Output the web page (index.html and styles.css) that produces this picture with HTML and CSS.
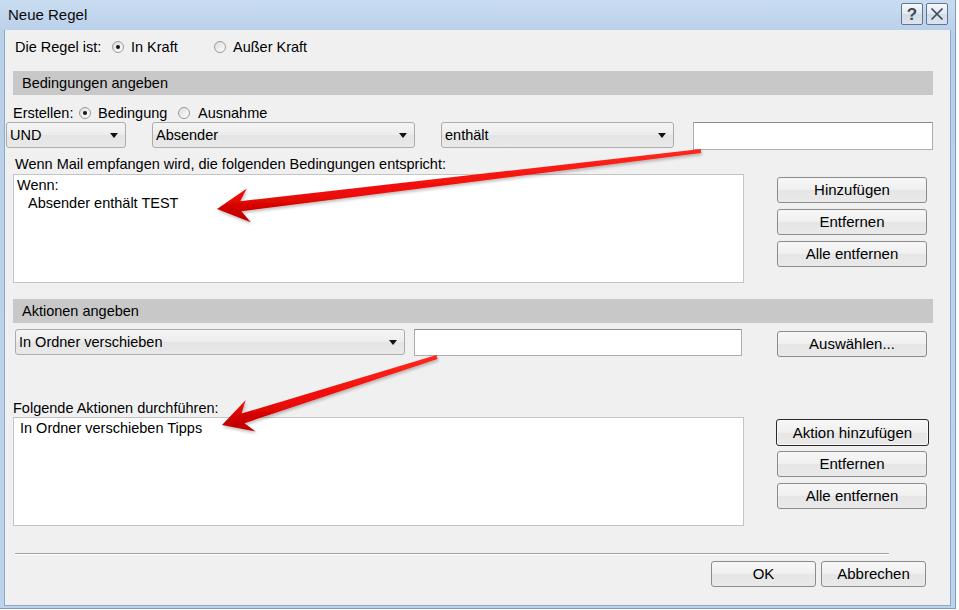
FILE: index.html
```html
<!DOCTYPE html>
<html lang="de">
<head>
<meta charset="utf-8">
<title>Neue Regel</title>
<link rel="stylesheet" href="styles.css">
</head>
<body>
<div class="window">
  <div class="titlebar">
    <span class="title">Neue Regel</span>
    <div class="tb-btns">
      <span class="tb-btn help">?</span>
      <span class="tb-btn close">
        <svg width="14" height="14" viewBox="0 0 14 14"><path d="M1.5 1.5 L12.5 12.5 M12.5 1.5 L1.5 12.5" stroke="#3c4a5c" stroke-width="1.7" fill="none"/></svg>
      </span>
    </div>
  </div>
  <div class="client">
    <div class="row state">
      <span class="lab1">Die Regel ist:</span>
      <span class="radio on"></span><span class="opt1">In Kraft</span>
      <span class="radio"></span><span class="opt2">Außer Kraft</span>
    </div>

    <div class="section s1">Bedingungen angeben</div>

    <div class="row create">
      <span class="lab2">Erstellen:</span>
      <span class="radio on"></span><span class="opt3">Bedingung</span>
      <span class="radio"></span><span class="opt4">Ausnahme</span>
    </div>

    <div class="selects">
      <div class="combo c-und">UND</div>
      <div class="combo c-abs">Absender</div>
      <div class="combo c-ent">enthält</div>
      <div class="textbox t-cond"></div>
    </div>

    <div class="label l1">Wenn Mail empfangen wird, die folgenden Bedingungen entspricht:</div>

    <div class="listrow">
      <div class="listbox lb1">
        <div class="line">Wenn:</div>
        <div class="line indent">Absender enthält TEST</div>
      </div>
      <div class="btncol bc1">
        <div class="btn">Hinzufügen</div>
        <div class="btn">Entfernen</div>
        <div class="btn">Alle entfernen</div>
      </div>
    </div>

    <div class="section s2">Aktionen angeben</div>

    <div class="actions">
      <div class="combo c-act">In Ordner verschieben</div>
      <div class="textbox t-act"></div>
      <div class="btn b-sel">Auswählen...</div>
    </div>

    <div class="label l2">Folgende Aktionen durchführen:</div>

    <div class="listrow">
      <div class="listbox lb2">
        <div class="line">In Ordner verschieben Tipps</div>
      </div>
      <div class="btncol bc2">
        <div class="btn default">Aktion hinzufügen</div>
        <div class="btn">Entfernen</div>
        <div class="btn">Alle entfernen</div>
      </div>
    </div>

    <div class="separator"></div>

    <div class="footer">
      <div class="btn fbtn">OK</div>
      <div class="btn fbtn">Abbrechen</div>
    </div>
  </div>

  <svg class="arrows" width="956" height="609" viewBox="0 0 956 609">
    <defs>
      <linearGradient id="red1" x1="0" y1="0" x2="0" y2="1">
        <stop offset="0" stop-color="#ff2a1e"/>
        <stop offset="0.6" stop-color="#ee0a08"/>
        <stop offset="1" stop-color="#b80000"/>
      </linearGradient>
      <filter id="sh" x="-10%" y="-30%" width="120%" height="160%">
        <feDropShadow dx="1" dy="2" stdDeviation="1.5" flood-color="#000" flood-opacity="0.25"/>
      </filter>
    </defs>
    <polygon filter="url(#sh)" fill="url(#red1)" points="217,209 250.8,222.2 241.4,211.2 701.2,153 700.8,149 240.2,201.2 246.8,188.4"/>
    <polygon filter="url(#sh)" fill="url(#red1)" points="222,425 255.6,431.6 244.5,423.2 437.6,358.9 436.4,355.1 241.5,413.6 245.6,400.2"/>
  </svg>
</div>
</body>
</html>
```

FILE: styles.css
```css
* { box-sizing: border-box; }
html, body { margin: 0; padding: 0; background: #ffffff; }
body {
  font-family: "Liberation Sans", Arial, sans-serif;
  font-size: 14.5px;
  color: #000;
}

.window {
  position: relative;
  width: 956px;
  height: 609px;
  background: linear-gradient(#c9dcf1, #bbd1ea 30px, #bdd3eb);
  border-right: 1px solid #7f9bbd;
  border-bottom: 1px solid #7f9bbd;
  padding: 0 4px 2px 4px;
  display: flex;
  flex-direction: column;
}

.titlebar {
  height: 30px;
  flex: none;
  display: flex;
  align-items: center;
  justify-content: space-between;
  padding: 0 3px 2px 4px;
}
.title { font-size: 15px; color: #0a0a0a; }
.tb-btns { display: flex; gap: 3px; }
.tb-btn {
  width: 22px;
  height: 22px;
  border: 1px solid #5f7590;
  border-radius: 2px;
  background: linear-gradient(#f6f8fb, #e2e8f0 50%, #d3dbe6 51%, #dde4ed);
  display: flex;
  align-items: center;
  justify-content: center;
  color: #3c4a5c;
  font-size: 17px;
  font-weight: bold;
  line-height: 1;
}

.client {
  flex: 1;
  background: #f0f0f0;
  border: 1px solid #8ea8c7;
  border-top: none;
  padding-left: 8px;
  display: flex;
  flex-direction: column;
  align-items: flex-start;
}

.row {
  display: flex;
  align-items: center;
  height: 20px;
  white-space: nowrap;
}
.state { margin-top: 7px; padding-left: 2px; }
.create { margin-top: 9px; height: 18px; }

.lab1 { width: 97px; }
.opt1 { width: 83px; margin-left: 7px; }
.opt2 { margin-left: 7px; }
.lab2 { width: 66px; }
.opt3 { width: 80px; margin-left: 7px; }
.opt4 { margin-left: 8px; }

.radio {
  width: 12px;
  height: 12px;
  border-radius: 50%;
  border: 1px solid #9a9a9a;
  background: linear-gradient(135deg, #dcdcdc, #ffffff);
  position: relative;
  flex: none;
}
.radio.on::after {
  content: "";
  position: absolute;
  left: 3px;
  top: 3px;
  width: 4px;
  height: 4px;
  border-radius: 50%;
  background: #151515;
}

.section {
  width: 920px;
  height: 24px;
  line-height: 24px;
  background: #c8c8c8;
  padding-left: 9px;
  flex: none;
}
.s1 { margin-top: 14px; }
.s2 { margin-top: 16px; }

.selects {
  display: flex;
  align-items: flex-start;
  margin-left: -7px;
  height: 28px;
}

.combo {
  height: 26px;
  line-height: 25px;
  border: 1px solid #acacac;
  border-radius: 3px;
  background: linear-gradient(#f5f5f5, #ececec 50%, #e4e4e4 51%, #e9e9e9);
  padding-left: 3px;
  position: relative;
  white-space: nowrap;
  flex: none;
}
.combo::after {
  content: "";
  position: absolute;
  right: 7px;
  top: 10px;
  border-left: 4px solid transparent;
  border-right: 4px solid transparent;
  border-top: 5px solid #111;
}
.c-und { width: 120px; }
.c-abs { width: 263px; margin-left: 26px; }
.c-ent { width: 233px; margin-left: 26px; }

.textbox {
  background: #fff;
  border: 1px solid #abadb3;
  border-top-color: #8a8d95;
  flex: none;
}
.t-cond { width: 240px; height: 28px; margin-left: 19px; }

.label { height: 18px; line-height: 18px; white-space: nowrap; }
.l1 { margin-top: 5px; padding-left: 2px; }
.l2 { margin-top: 42px; }

.listrow { display: flex; align-items: flex-start; }
.lb1 { margin-top: 1px; }
.listbox {
  width: 731px;
  height: 109px;
  background: #fff;
  border: 1px solid #c4c4c4;
  padding: 1px 0 0 3px;
  flex: none;
}
.line { height: 18px; line-height: 18px; white-space: nowrap; }
.indent { padding-left: 11px; }
.lb2 .line { padding-left: 3px; }

.btncol { display: flex; flex-direction: column; flex: none; }
.bc1 { margin-left: 33px; padding-top: 3px; gap: 6px; margin-top: 1px; }
.bc2 { margin-left: 32px; padding-top: 2px; }

.btn {
  width: 150px;
  height: 26px;
  line-height: 24px;
  text-align: center;
  border: 1px solid #8c8c8c;
  border-radius: 3px;
  background: linear-gradient(#f7f7f7, #efefef 50%, #e6e6e6 51%, #e9e9e9);
  white-space: nowrap;
  font-size: 15px;
  flex: none;
}
.bc2 .btn { margin-left: 1px; }
.bc2 .btn + .btn { margin-top: 6px; }
.bc2 .btn.default + .btn { margin-top: 5px; }
.bc2 .btn.default {
  width: 153px;
  height: 27px;
  margin-left: 0;
  border: 1px solid #2a2a2a;
  box-shadow: inset 0 0 0 1px #f8f8f8;
  line-height: 25px;
}

.actions {
  margin-top: 6px;
  display: flex;
  align-items: flex-start;
  height: 28px;
}
.c-act { width: 390px; margin-left: 2px; }
.t-act { width: 328px; height: 27px; margin-left: 9px; }
.b-sel { margin-left: 35px; margin-top: 2px; }

.separator {
  margin-top: 27px;
  margin-left: 2px;
  width: 874px;
  height: 2px;
  border-top: 1px solid #a0a0a0;
  border-bottom: 1px solid #ffffff;
}

.footer {
  margin-top: 6px;
  align-self: stretch;
  display: flex;
  justify-content: flex-end;
  gap: 5px;
  padding-right: 24px;
}
.fbtn { width: 105px; }

.arrows {
  position: absolute;
  left: 0;
  top: 0;
  pointer-events: none;
}
```
